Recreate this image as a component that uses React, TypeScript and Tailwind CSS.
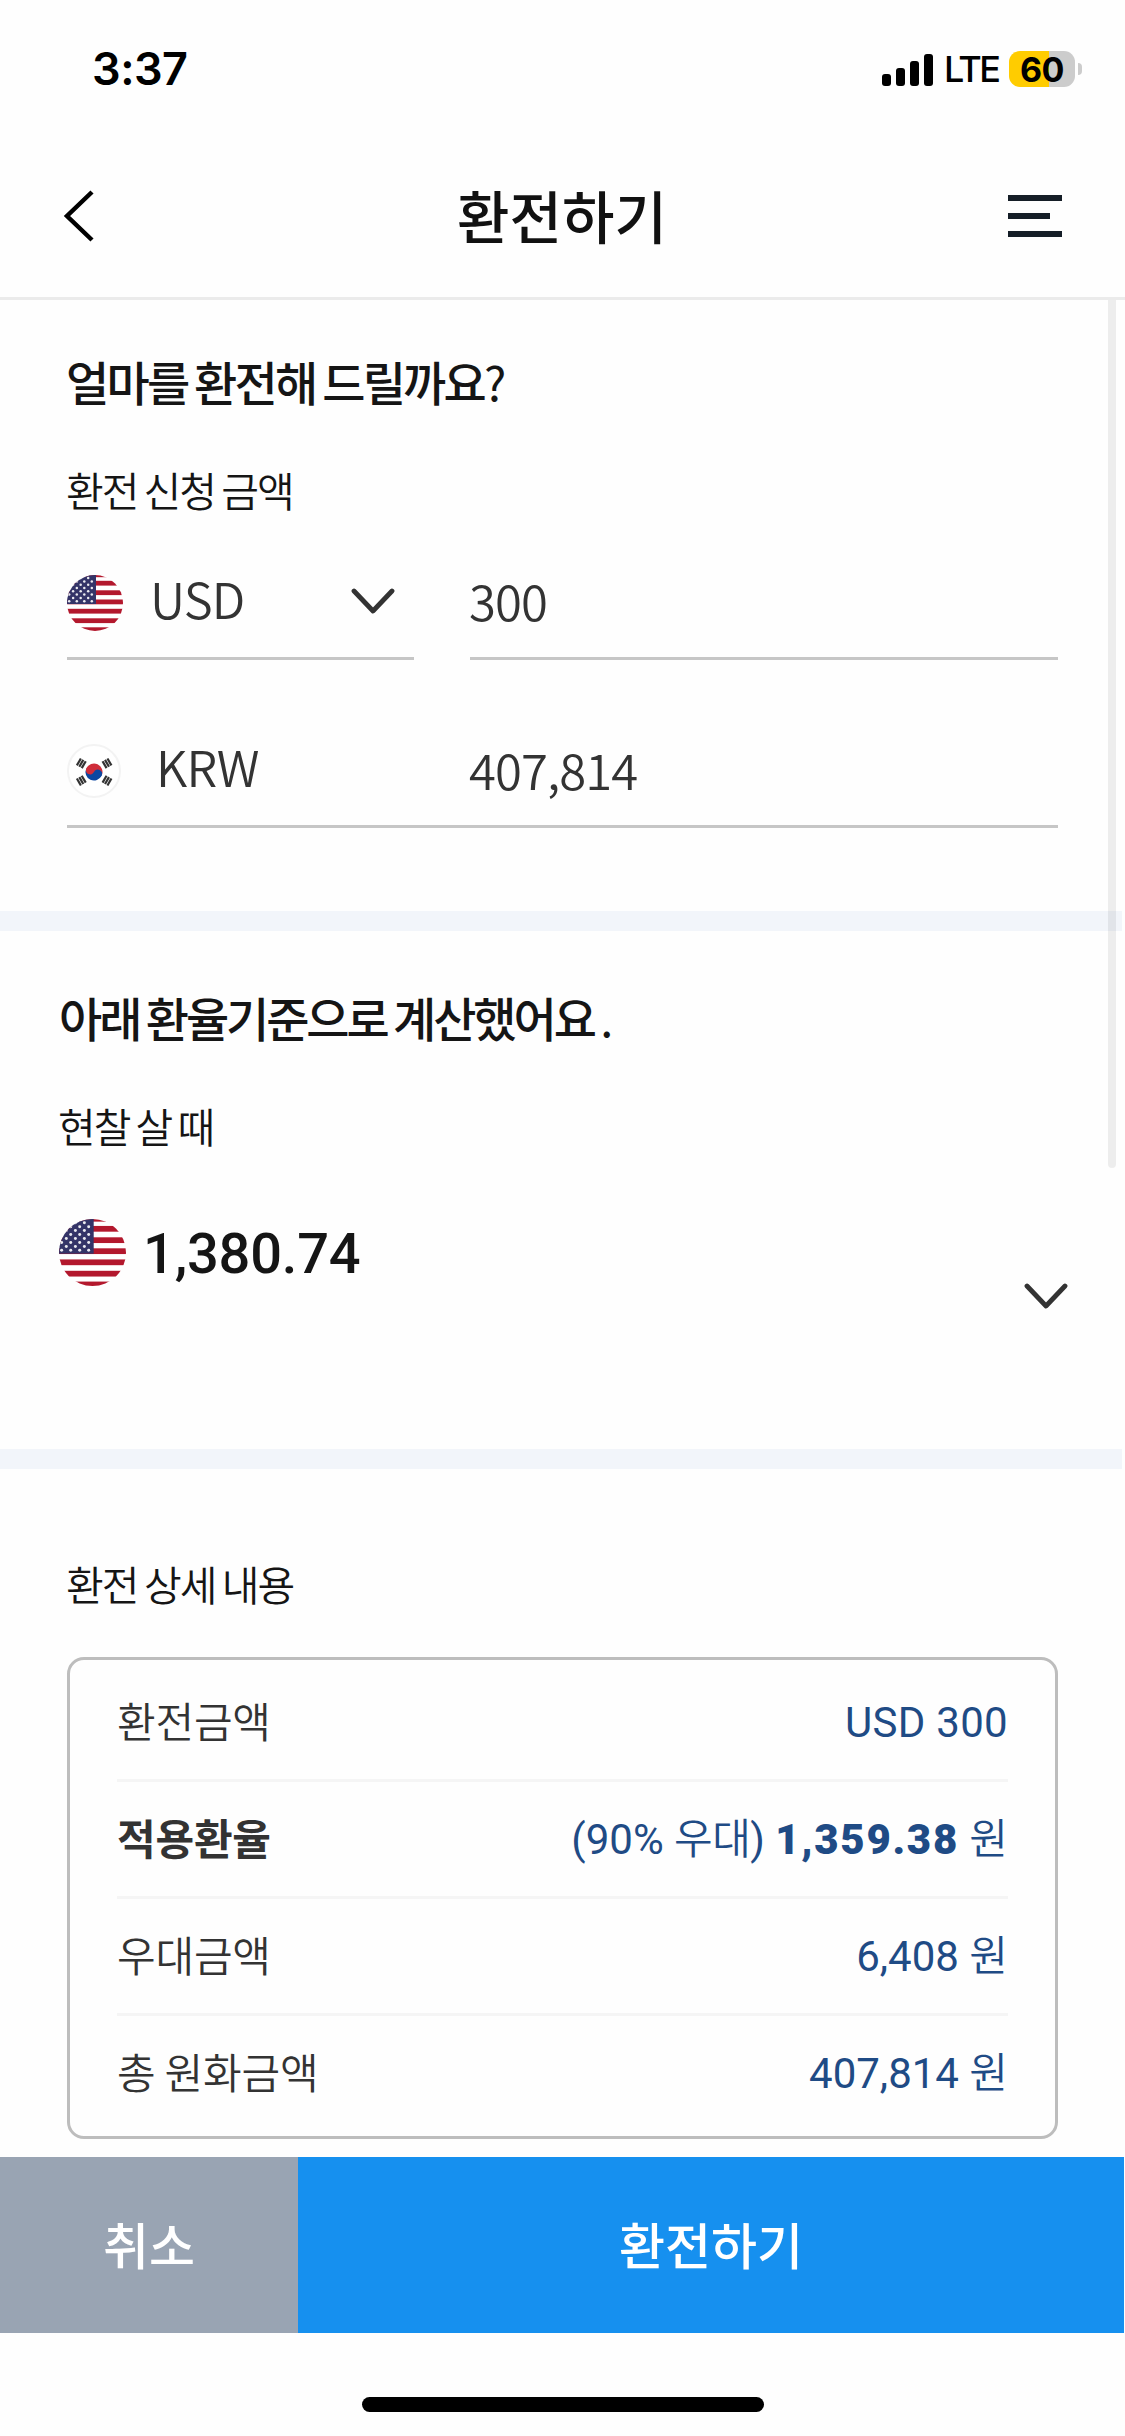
import React from "react";

interface DetailRow {
  label: string;
  value: React.ReactNode;
  strong?: boolean;
}

const won = <span className="font-[350]">원</span>;

const detailRows: DetailRow[] = [
  { label: "환전금액", value: <span className="tracking-[0.3px]">USD 300</span> },
  {
    label: "적용환율",
    value: (
      <>
        (90% <span className="font-[350] tracking-[-0.6px]">우대</span>){" "}
        <b className="font-black tracking-[1.7px]">1,359.38</b> {won}
      </>
    ),
    strong: true,
  },
  { label: "우대금액", value: <>6,408 {won}</> },
  { label: "총 원화금액", value: <>407,814 {won}</> },
];

const stripes = [-2.6, 5.8, 15.3, 24.5, 33.8, 43.3, 52.3];
const starRows = [0, 1, 2, 3, 4, 5, 6, 7];

function UsFlag({ id, className }: { id: string; className: string }) {
  return (
    <svg viewBox="0 0 56 56" className={className}>
      <clipPath id={id}>
        <circle cx="28" cy="28" r="28" />
      </clipPath>
      <g clipPath={`url(#${id})`}>
        <rect width="56" height="56" fill="#fff" />
        {stripes.map((y) => (
          <rect key={y} y={y} width="56" height="4.8" fill="#b3182d" />
        ))}
        <rect width="29" height="29" fill="#343468" />
        {starRows.map((row) =>
          (row % 2 ? [6.1, 13.7, 21.2] : [2.2, 9.8, 17.3, 24.8]).map((x) => (
            <circle key={`${row}-${x}`} cx={x} cy={26.2 - row * 3.3} r="1.25" fill="#fff" opacity="0.9" />
          ))
        )}
      </g>
    </svg>
  );
}

function KrFlag({ className }: { className: string }) {
  return (
    <svg viewBox="0 0 54 54" className={className}>
      <circle cx="27" cy="27" r="26" fill="#fff" stroke="#f3f3f3" strokeWidth="2" />
      <g transform="rotate(25 27 28)">
        <path d="M18.5 28a8.5 8.5 0 0 1 17 0z" fill="#cf2d3a" />
        <path d="M18.5 28a8.5 8.5 0 0 0 17 0z" fill="#0b47a1" />
        <circle cx="22.75" cy="28" r="4.25" fill="#cf2d3a" />
        <circle cx="31.25" cy="28" r="4.25" fill="#0b47a1" />
      </g>
      {[
        [14.3, 19.3, -60],
        [40, 19.3, 60],
        [14.3, 36.6, 60],
        [40, 36.6, -60],
      ].map(([x, y, angle]) => (
        <g key={`${x}-${y}`} transform={`translate(${x} ${y}) rotate(${angle})`} fill="#333">
          <rect x="-4" y="-3.9" width="8" height="2.2" />
          <rect x="-4" y="-1.1" width="8" height="2.2" />
          <rect x="-4" y="1.7" width="8" height="2.2" />
        </g>
      ))}
    </svg>
  );
}

function Chevron({ className }: { className: string }) {
  return (
    <svg viewBox="0 0 44 26" className={className} fill="none" stroke="#333" strokeWidth="4.8" strokeLinecap="round" strokeLinejoin="round">
      <path d="M3 3l19 20L41 3" />
    </svg>
  );
}

function StatusBar() {
  return (
    <div className="flex h-[138px] items-center justify-between pr-[43px] pl-[92px] font-['Inter',sans-serif] text-black">
      <span className="text-[45px] font-semibold tracking-[-0.5px]">3:37</span>
      <div className="flex items-center">
        <svg viewBox="0 0 52 33" className="h-[33px] w-[52px]">
          <rect x="0" y="21" width="9" height="12" rx="3" />
          <rect x="14" y="15" width="9" height="18" rx="3" />
          <rect x="28" y="8" width="9" height="25" rx="3" />
          <rect x="42" y="1" width="9" height="32" rx="3" />
        </svg>
        <span className="ml-[10px] w-[55px] text-[36px] font-medium tracking-[-2.6px]">LTE</span>
        <span className="ml-[10px] flex h-9 w-[66px] items-center justify-center rounded-[11px] bg-[linear-gradient(90deg,#ffcc00_60%,#cccccc_60%)] text-[34px] font-bold tracking-[-0.5px]">
          60
        </span>
        <span className="ml-[3px] h-3 w-1 rounded-r-full bg-[#cccccc]" />
      </div>
    </div>
  );
}

function Header() {
  return (
    <header className="flex h-[162px] items-center justify-between border-b-3 border-[#ebebeb] pr-[63px] pb-[3px] pl-[63px]">
      <button aria-label="뒤로">
        <svg viewBox="0 0 32 52" className="h-[52px] w-8" fill="none" stroke="#000" strokeWidth="4.5">
          <path d="M29 2L4 26l25 24" />
        </svg>
      </button>
      <h1 className="ml-[21px] pb-[3px] text-[57px] font-medium text-[#111]">환전하기</h1>
      <button aria-label="메뉴" className="flex flex-col gap-3">
        <span className="h-1.5 w-[54px] bg-[#151e27]" />
        <span className="h-1.5 w-[42px] bg-[#151e27]" />
        <span className="h-1.5 w-[54px] bg-[#151e27]" />
      </button>
    </header>
  );
}

export default function App() {
  return (
    <div className="relative flex h-[2436px] w-[1125px] flex-col overflow-hidden bg-[#fefefe] font-['Noto_Sans_CJK_KR',sans-serif] text-[#151515]">
      <StatusBar />
      <Header />

      {/* Amount */}
      <section className="h-[611px] pr-[67px] pl-[66px] pt-[51px]">
        <h2 className="text-[47px] leading-[60px] font-medium tracking-[-2.8px] [word-spacing:-1px]">
          얼마를 환전해 드릴까요<span className="font-normal">?</span>
        </h2>
        <p className="mt-[48px] text-[41px] leading-[60px] font-[350] tracking-[-2px] [word-spacing:-1px]">환전 신청 금액</p>
        <div className="mt-[41px] flex h-[100px] gap-14 pl-px text-[49px] leading-[60px] font-[350] text-[#333]">
          <div className="flex w-[347px] items-start border-b-3 border-[#c6c6c6]">
            <UsFlag id="us-small" className="mt-[15px] h-14 w-14" />
            <span className="mt-[8px] ml-[27px] tracking-[-0.9px]">USD</span>
            <Chevron className="mt-7 mr-[19px] ml-auto h-[26px] w-11" />
          </div>
          <div className="flex-1 border-b-3 border-[#c6c6c6] pt-[10px]">
            <span className="-ml-px tracking-[-0.9px]">300</span>
          </div>
        </div>
        <div className="mt-[68px] ml-px flex h-[100px] border-b-3 border-[#c6c6c6] text-[49px] leading-[60px] font-[350] tracking-[-0.9px] text-[#333]">
          <div className="flex w-[402px] items-start">
            <KrFlag className="mt-4 h-[54px] w-[54px]" />
            <span className="mt-[8px] ml-[35px]">KRW</span>
          </div>
          <div className="pt-[11px]">407,814</div>
        </div>
      </section>

      <div className="h-5 w-[1122px] bg-[#f2f5fa]" />

      {/* Rate */}
      <section className="flex h-[518px] justify-between pr-[57px] pl-[59px]">
        <div className="pt-[56px]">
          <h2 className="text-[47px] leading-[60px] font-medium tracking-[-3.1px] [word-spacing:-1px]">
            아래 환율기준으로 계산했어요 <span className="font-normal">.</span>
          </h2>
          <p className="mt-[48px] -ml-px text-[41px] leading-[60px] font-[350] tracking-[-2px] [word-spacing:-1px]">현찰 살 때</p>
          <div className="mt-[62px] flex items-center">
            <UsFlag id="us-large" className="h-[67px] w-[67px]" />
            <span className="mt-[3px] ml-[17px] font-['Roboto',sans-serif] text-[56px] leading-[68px] font-medium tracking-[-0.2px]">
              1,380.74
            </span>
          </div>
        </div>
        <Chevron className="mt-[352px] h-[26px] w-11" />
      </section>

      <div className="h-5 w-[1122px] bg-[#f2f5fa]" />

      {/* Details */}
      <section className="h-[688px] px-[67px] pt-[84px]">
        <h3 className="-ml-px text-[41px] leading-[60px] font-[350] tracking-[-1.9px] [word-spacing:-1px]">환전 상세 내용</h3>
        <dl className="mt-[44px] h-[482px] rounded-[17px] border-3 border-[#bdbdbd] px-[47px] pt-[5px] text-[42px] leading-[60px] font-[350]">
          {detailRows.map((row) => (
            <div key={row.label} className="flex h-[117px] items-center justify-between border-b-3 border-[#f5f5f5] last:border-transparent">
              <dt className={row.strong ? "pb-1 font-bold tracking-[-0.2px] text-[#333]" : "pb-1 tracking-[-0.2px] text-[#333]"}>
                {row.label}
              </dt>
              <dd className="pt-[2px] font-['Roboto','Noto_Sans_CJK_KR',sans-serif] font-normal text-[#1f4b85]">{row.value}</dd>
            </div>
          ))}
        </dl>
      </section>

      <div className="flex h-[176px] w-[1124px] text-[50px] font-medium text-white">
        <button className="w-[298px] bg-[#99a4b3] pb-[4px]">취소</button>
        <button className="flex-1 bg-[#1690ef] pb-[4px]">환전하기</button>
      </div>
      <div className="mt-16 h-[15px] w-[402px] self-center rounded-full bg-black" />

      {/* Scroll indicator */}
      <div className="absolute top-[300px] left-[1108px] h-[868px] w-2 rounded-b-full bg-black/[0.065]" />
    </div>
  );
}
